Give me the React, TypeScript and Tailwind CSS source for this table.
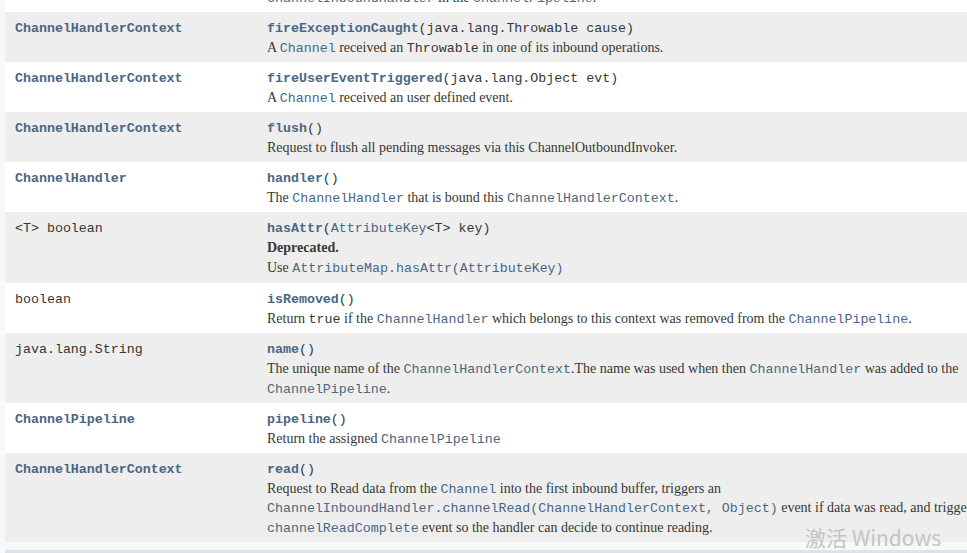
import type { ReactNode } from "react";

const mono = "font-['Liberation_Mono','Courier_New',monospace] text-[13.3px] leading-none";

// linked code (blue-grey), optionally bold like javadoc summary links
function L({ children, b }: { children: ReactNode; b?: boolean }) {
  return (
    <code className={`${mono} text-[#4a6782] ${b ? "font-bold" : ""}`}>
      {children}
    </code>
  );
}

// plain code
function C({ children }: { children: ReactNode }) {
  return <code className={`${mono} text-[#353833]`}>{children}</code>;
}

type Row = {
  first: ReactNode;
  sig: ReactNode;
  desc: ReactNode[];
  extra?: boolean;
};

const rows: Row[] = [
  {
    first: <L b>ChannelHandlerContext</L>,
    sig: (
      <>
        <L b>fireExceptionCaught</L>
        <C>(java.lang.Throwable cause)</C>
      </>
    ),
    desc: [
      <>
        A <L>Channel</L> received an <C>Throwable</C> in one of its inbound
        operations.
      </>,
    ],
  },
  {
    first: <L b>ChannelHandlerContext</L>,
    sig: (
      <>
        <L b>fireUserEventTriggered</L>
        <C>(java.lang.Object evt)</C>
      </>
    ),
    desc: [
      <>
        A <L>Channel</L> received an user defined event.
      </>,
    ],
  },
  {
    first: <L b>ChannelHandlerContext</L>,
    sig: (
      <>
        <L b>flush</L>
        <C>()</C>
      </>
    ),
    desc: [<>Request to flush all pending messages via this ChannelOutboundInvoker.</>],
  },
  {
    first: <L b>ChannelHandler</L>,
    sig: (
      <>
        <L b>handler</L>
        <C>()</C>
      </>
    ),
    desc: [
      <>
        The <L>ChannelHandler</L> that is bound this <L>ChannelHandlerContext</L>.
      </>,
    ],
  },
  {
    first: <C>&lt;T&gt; boolean</C>,
    sig: (
      <>
        <L b>hasAttr</L>
        <C>(</C>
        <L>AttributeKey</L>
        <C>&lt;T&gt; key)</C>
      </>
    ),
    desc: [
      <span className="font-bold">Deprecated.</span>,
      <>
        Use <L>AttributeMap.hasAttr(AttributeKey)</L>
      </>,
    ],
    extra: true,
  },
  {
    first: <C>boolean</C>,
    sig: (
      <>
        <L b>isRemoved</L>
        <C>()</C>
      </>
    ),
    desc: [
      <>
        Return <C>true</C> if the <L>ChannelHandler</L> which belongs to this
        context was removed from the <L>ChannelPipeline</L>.
      </>,
    ],
  },
  {
    first: <C>java.lang.String</C>,
    sig: (
      <>
        <L b>name</L>
        <C>()</C>
      </>
    ),
    desc: [
      <>
        The unique name of the <L>ChannelHandlerContext</L>.The name was used
        when then <L>ChannelHandler</L> was added to the
      </>,
      <>
        <L>ChannelPipeline</L>.
      </>,
    ],
  },
  {
    first: <L b>ChannelPipeline</L>,
    sig: (
      <>
        <L b>pipeline</L>
        <C>()</C>
      </>
    ),
    desc: [
      <>
        Return the assigned <L>ChannelPipeline</L>
      </>,
    ],
  },
  {
    first: <L b>ChannelHandlerContext</L>,
    sig: (
      <>
        <L b>read</L>
        <C>()</C>
      </>
    ),
    desc: [
      <>
        Request to Read data from the <L>Channel</L> into the first inbound
        buffer, triggers an
      </>,
      <>
        <L>ChannelInboundHandler.channelRead(ChannelHandlerContext, Object)</L>{" "}
        event if data was read, and triggers a
      </>,
      <>
        <L>channelReadComplete</L> event so the handler can decide to continue
        reading.
      </>,
    ],
  },
];

export default function App() {
  return (
    <div className="relative h-[553px] w-[967px] overflow-hidden bg-[#f8f8f8] pl-[5px] font-['Liberation_Serif','Times_New_Roman',serif] text-[14px] text-[#353833]">
      <div className="flex flex-col">
        {/* tail of the previous row, cut off by the scroll position */}
        <div className="h-[12px] overflow-hidden bg-white">
          <div className="-mt-[12px] h-[19.5px] whitespace-nowrap pl-[262px] leading-[19.5px]">
            <L>ChannelInboundHandler</L> in the <L>ChannelPipeline</L>.
          </div>
        </div>

        {rows.map((r, i) => (
          <div
            key={i}
            className={`flex pt-[5px] ${r.extra ? "pb-[6px]" : "pb-[4.5px]"} ${
              i % 2 === 0 ? "bg-[#eeeeee]" : "bg-white"
            }`}
          >
            <div className="h-[21px] w-[252px] shrink-0 pl-[10px] leading-[21px]">
              {r.first}
            </div>
            <div className="flex-1 pl-[10px]">
              <div className="h-[21px] whitespace-nowrap leading-[21px]">{r.sig}</div>
              {r.desc.map((d, j) => (
                <div key={j} className="h-[19.5px] whitespace-nowrap leading-[19.5px]">
                  {d}
                </div>
              ))}
            </div>
          </div>
        ))}

        <div className="h-[8px]" />
        <div className="h-[10px] bg-[#dee3e9]" />
      </div>

      <div className="absolute left-[805px] top-[523px] font-['Noto_Sans_CJK_SC','Noto_Sans',sans-serif] text-[21px] leading-[28px] text-[#c4c4c4]">
        激活 Windows
      </div>
    </div>
  );
}
